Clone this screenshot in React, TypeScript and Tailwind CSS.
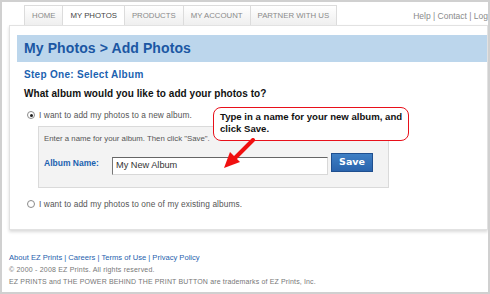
import { FC } from "react";

const tabs = ["HOME", "MY PHOTOS", "PRODUCTS", "MY ACCOUNT", "PARTNER WITH US"];

const Radio: FC<{ checked?: boolean }> = ({ checked }) => (
  <span className="relative inline-flex w-[8px] h-[8px] rounded-full border border-[#8a8a8a] bg-white shrink-0 items-center justify-center">
    {checked && <span className="w-[3px] h-[3px] rounded-full bg-[#222]" />}
  </span>
);

const App: FC = () => {
  return (
    <div className="relative w-[490px] h-[294px] overflow-hidden bg-white border-2 border-[#d0d0d0] font-['Liberation_Sans',Arial,sans-serif]">
      {/* top nav */}
      <div className="flex justify-between items-start pl-[22px] pt-[3px]">
        <div className="flex">
          {tabs.map((tab) => (
            <div
              key={tab}
              className={
                tab === "MY PHOTOS"
                  ? "h-[20px] px-[7px] flex items-center border border-[#dcdcdc] border-b-0 -ml-px bg-white text-[7.8px] text-[#444]"
                  : "h-[20px] px-[7px] flex items-center border border-[#dcdcdc] border-b-0 -ml-px first:ml-0 bg-gradient-to-b from-white to-[#efefef] text-[7.8px] text-[#8a8a8a]"
              }
            >
              {tab}
            </div>
          ))}
        </div>
        <div className="pt-[5px] text-[8.5px] text-[#8a8a8a] whitespace-nowrap">
          Help | Contact | Log
        </div>
      </div>

      {/* main panel */}
      <div className="ml-[7px] h-[205px] border border-[#e2e2e2] shadow-[0_2px_3px_rgba(0,0,0,0.15)] pt-[9px] pl-[7px]">
        <div className="h-[27px] bg-[#bcd6ec] flex items-center pl-[7px]">
          <h1 className="text-[14px] font-bold text-[#1b57a3] tracking-[0.1px]">
            My Photos &gt; Add Photos
          </h1>
        </div>
        <div className="pl-[7px]">
          <div className="mt-[8px] text-[10px] font-bold text-[#1b62b0] tracking-[0.3px] leading-none">
            Step One: Select Album
          </div>
          <div className="mt-[9px] text-[10px] font-bold text-[#111] tracking-[0.05px] leading-none">
            What album would you like to add your photos to?
          </div>
          <div className="mt-[12px] flex items-center gap-[4px] pl-[3px] text-[8.3px] text-[#555] leading-none tracking-[0.1px]">
            <Radio checked />
            <span>I want to add my photos to a new album.</span>
          </div>
          <div className="ml-[14px] mt-[7px] w-[351px] h-[62px] bg-[#f3f3f3] border border-[#dadada] pl-[5px] pt-[8px]">
            <div className="text-[7.8px] text-[#555] leading-none">
              Enter a name for your album. Then click "Save".
            </div>
            <div className="flex items-start mt-[10px]">
              <span className="w-[68px] text-[8.5px] font-bold text-[#1b62b0] pt-[6px] leading-none">
                Album Name:
              </span>
              <div className="w-[216px] h-[18px] mt-[4px] bg-white border border-[#d8d8d8] border-t-[#666] border-l-[#777] flex items-center pl-[3px] text-[9.2px] text-[#333]">
                My New Album
              </div>
              <button className="ml-[3px] w-[42px] h-[19px] bg-gradient-to-b from-[#3f7fc4] to-[#2a64ad] border border-[#1f4f8f] text-white text-[9.5px] font-bold font-['DejaVu_Sans',Verdana,sans-serif]">
                Save
              </button>
            </div>
          </div>
          <div className="mt-[12px] flex items-center gap-[4px] pl-[3px] text-[8.3px] text-[#555] leading-none tracking-[0.1px]">
            <Radio />
            <span>I want to add my photos to one of my existing albums.</span>
          </div>
        </div>
      </div>

      {/* footer */}
      <div className="pl-[7px] mt-[24px]">
        <div className="text-[7.6px] text-[#1f5fae] leading-none">
          About EZ Prints | Careers | Terms of Use | Privacy Policy
        </div>
        <div className="mt-[4px] text-[7px] text-[#777] leading-none tracking-[0.2px]">
          © 2000 - 2008 EZ Prints. All rights reserved.
        </div>
        <div className="mt-[5px] text-[7px] text-[#777] leading-none tracking-[0.15px]">
          EZ PRINTS and THE POWER BEHIND THE PRINT BUTTON are trademarks of EZ Prints, Inc.
        </div>
      </div>

      {/* annotation callout */}
      <div className="absolute left-[211px] top-[105px] w-[196px] h-[34px] rounded-[8px] border-[1.5px] border-[#e8101a] bg-white pl-[6px] pt-[3px] text-[9.6px] font-bold text-[#111] leading-[12px]">
        Type in a name for your new album, and
        <br />
        click Save.
      </div>
      <svg
        className="absolute left-[218px] top-[136px]"
        width="40"
        height="34"
        viewBox="0 0 40 34"
      >
        <path d="M33 2 L15 20" stroke="#f01010" strokeWidth="4" strokeLinecap="round" />
        <polygon points="4,30 10,14 20,24" fill="#f01010" />
      </svg>
    </div>
  );
};

export default App;
